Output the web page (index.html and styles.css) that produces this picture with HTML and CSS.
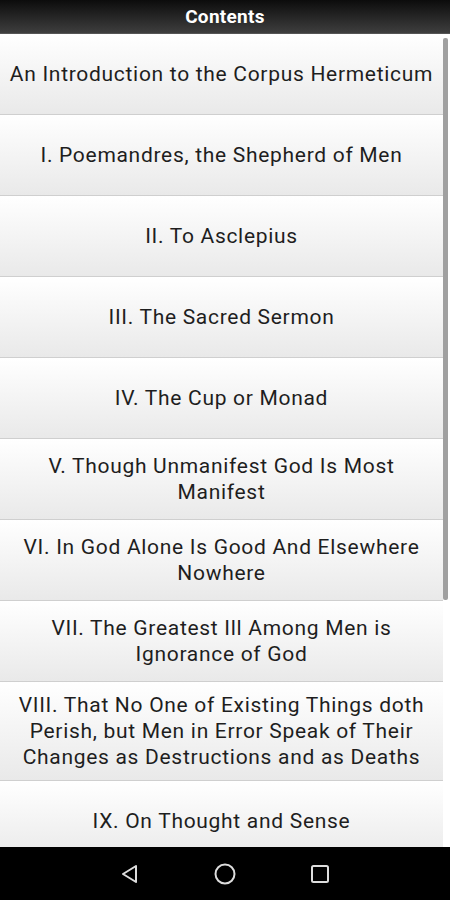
FILE: index.html
```html
<!DOCTYPE html>
<html lang="en">
<head>
    <meta charset="UTF-8">
    <meta name="viewport" content="width=device-width, initial-scale=1.0">
    <title>Contents</title>
    <link rel="stylesheet" href="styles.css">
</head>
<body>
    <div class="screen">
        <header class="title-bar">Contents</header>
        <div class="list-wrap">
            <ul class="toc">
                <li class="toc-item">An Introduction to the Corpus Hermeticum</li>
                <li class="toc-item">I. Poemandres, the Shepherd of Men</li>
                <li class="toc-item">II. To Asclepius</li>
                <li class="toc-item">III. The Sacred Sermon</li>
                <li class="toc-item">IV. The Cup or Monad</li>
                <li class="toc-item">V. Though Unmanifest God Is Most Manifest</li>
                <li class="toc-item">VI. In God Alone Is Good And Elsewhere Nowhere</li>
                <li class="toc-item">VII. The Greatest Ill Among Men is Ignorance of God</li>
                <li class="toc-item">VIII. That No One of Existing Things doth Perish, but Men in Error Speak of Their Changes as Destructions and as Deaths</li>
                <li class="toc-item">IX. On Thought and Sense</li>
            </ul>
            <div class="scrollbar"></div>
        </div>
        <nav class="nav-bar">
            <svg width="22" height="22" viewBox="0 0 22 22"><path d="M17 3 L4 11 L17 19 Z" fill="none" stroke="#ddd" stroke-width="2" stroke-linejoin="round"/></svg>
            <svg width="24" height="24" viewBox="0 0 24 24"><circle cx="12" cy="12" r="9.5" fill="none" stroke="#ddd" stroke-width="2"/></svg>
            <svg width="22" height="22" viewBox="0 0 22 22"><rect x="3" y="3" width="16" height="16" rx="1.5" fill="none" stroke="#ddd" stroke-width="2"/></svg>
        </nav>
    </div>
</body>
</html>
```

FILE: styles.css
```css
body {
    margin: 0;
    font-family: Roboto, "Liberation Sans", sans-serif;
    background-color: #000;
}

.screen {
    width: 450px;
    height: 900px;
    display: flex;
    flex-direction: column;
    overflow: hidden;
    background-color: #fff;
}

.title-bar {
    height: 34px;
    flex-shrink: 0;
    display: flex;
    align-items: center;
    justify-content: center;
    box-sizing: border-box;
    border-bottom: 1px solid #555;
    background: linear-gradient(#0c0c0c, #3e3e3e);
    color: #fff;
    font-size: 19px;
    font-weight: bold;
    letter-spacing: 0.3px;
}

.list-wrap {
    flex: 1;
    position: relative;
    overflow: hidden;
}

.toc {
    list-style-type: none;
    margin: 0;
    padding: 0;
    width: 443px;
}

.toc-item {
    min-height: 81px;
    box-sizing: border-box;
    padding: 10px 8px;
    display: flex;
    align-items: center;
    justify-content: center;
    text-align: center;
    font-size: 21px;
    letter-spacing: 0.7px;
    line-height: 26px;
    color: #1e1e1e;
    border-bottom: 1px solid #cfcfcf;
    background: linear-gradient(#fff, #e9e9e9);
}

.scrollbar {
    position: absolute;
    top: 4px;
    right: 2px;
    width: 5px;
    height: 562px;
    border-radius: 2px;
    background-color: #a0a0a0;
}

.nav-bar {
    height: 53px;
    flex-shrink: 0;
    background-color: #000;
    display: flex;
    align-items: center;
    justify-content: center;
    gap: 72px;
}
```
